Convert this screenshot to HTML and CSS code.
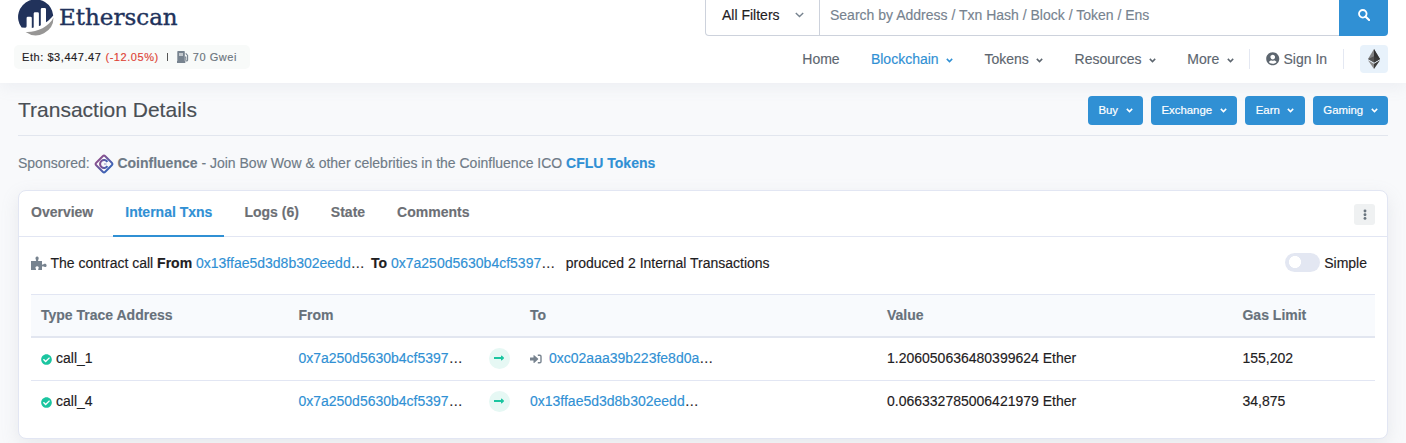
FILE: index.html
```html
<!DOCTYPE html>
<html lang="en">
<head>
<meta charset="utf-8">
<title>Transaction Details</title>
<link rel="stylesheet" href="styles.css">
</head>
<body>
<svg class="defs" width="0" height="0">
  <symbol id="angle" viewBox="0 0 7 5"><path d="M.8.9 3.5 3.6 6.2.9" fill="none" stroke="currentColor" stroke-width="1.5"/></symbol>
  <symbol id="check" viewBox="0 0 512 512"><path fill="currentColor" d="M504 256c0 136.967-111.033 248-248 248S8 392.967 8 256 119.033 8 256 8s248 111.033 248 248zM227.314 387.314l184-184c6.248-6.248 6.248-16.379 0-22.627l-22.627-22.627c-6.248-6.249-16.379-6.249-22.628 0L216 308.118l-70.059-70.059c-6.248-6.248-16.379-6.248-22.628 0l-22.627 22.627c-6.248 6.248-6.248 16.379 0 22.627l104 104c6.249 6.249 16.379 6.249 22.628.001z"/></symbol>
  <symbol id="arrow" viewBox="0 0 448 512"><path fill="currentColor" d="M313.941 216H12c-6.627 0-12 5.373-12 12v56c0 6.627 5.373 12 12 12h301.941v46.059c0 21.382 25.851 32.09 40.971 16.971l86.059-86.059c9.373-9.373 9.373-24.569 0-33.941l-86.059-86.059c-15.119-15.119-40.971-4.411-40.971 16.971V216z"/></symbol>
</svg>
<header class="header">
  <div class="brand">
    <div class="logo">
      <svg width="36" height="36" viewBox="0 0 36 36">
        <path fill="#21325b" d="M3.6 27.6A17.6 17.6 0 1 1 35.2 15.4C33 18.2 30.700 20.400 28 22.300V9.300q0-1.300-1.300-1.300h-2.600q-1.300 0-1.300 1.300v15.900q-.7.4-1.900.8V13.500q0-1.300-1.300-1.300h-2.600q-1.300 0-1.300 1.300v14q-.9.3-1.900.5V18q0-1.300-1.300-1.300H9.900Q8.600 16.700 8.600 18v8.200q0 1.400-1.300 1.500Z"/>
        <path fill="#979695" d="M35.500 17.500A17.700 17.700 0 0 1 7.600 32C18 32.700 31 27 35.500 17.500Z"/>
      </svg>
      <span class="wordmark">Etherscan</span>
    </div>
    <div class="ticker"><span>Eth: $3,447.47</span><span class="drop">(-12.05%)</span><span class="bar"></span>
      <svg width="12" height="12" viewBox="0 0 12 12"><path fill="#77838f" d="M1 0h6q.8 0 .8.8V10h.5v2H0v-2h.3V.8Q.3 0 1 0Z"/><path fill="#c3c9ce" d="M2 2h4v3H2z"/><path d="M8 6h.8v3q0 1 .8 1t1-.9V4.500L8.700 2.300M10.600 4.500v2" fill="none" stroke="#77838f" stroke-width="1.100"/></svg>
      <span class="gas">70 Gwei</span></div>
  </div>
  <div class="tools">
    <div class="search">
      <div class="filter">All Filters<svg width="9" height="6" viewBox="0 0 9 6"><path d="m.8.9 3.700 3.600L8.200.9" fill="none" stroke="#77838f" stroke-width="1.400"/></svg></div>
      <div class="query">Search by Address / Txn Hash / Block / Token / Ens</div>
      <div class="go"><svg width="12" height="12" viewBox="0 0 12 12"><circle cx="4.800" cy="4.800" r="3.800" fill="none" stroke="#fff" stroke-width="1.800"/><path d="m7.700 7.700 3.400 3.400" stroke="#fff" stroke-width="2.100" stroke-linecap="round"/></svg></div>
    </div>
    <nav class="nav">
      <a>Home</a>
      <a class="active">Blockchain<svg class="angle"><use href="#angle"/></svg></a>
      <a>Tokens<svg class="angle"><use href="#angle"/></svg></a>
      <a>Resources<svg class="angle"><use href="#angle"/></svg></a>
      <a>More<svg class="angle"><use href="#angle"/></svg></a>
      <div class="account"><svg width="13.500" height="13.500" viewBox="0 0 496 512"><path fill="#5d666f" d="M248 8C111 8 0 119 0 256s111 248 248 248 248-111 248-248S385 8 248 8zm0 96c48.600 0 88 39.400 88 88s-39.400 88-88 88-88-39.400-88-88 39.400-88 88-88zm0 344c-58.700 0-111.300-26.600-146.500-68.200 18.800-35.400 55.600-59.800 98.500-59.800 2.400 0 4.800.4 7.100 1.100 13 4.200 26.600 6.900 40.900 6.900 14.300 0 28-2.700 40.900-6.900 2.300-.7 4.700-1.100 7.100-1.100 42.900 0 79.700 24.400 98.500 59.800C359.300 421.400 306.700 448 248 448z"/></svg>Sign In</div>
      <div class="network"><svg width="12" height="20" viewBox="0 0 12 20"><path fill="#828384" d="m6 0 6 10-6 3.600L0 10Z"/><path fill="#343434" d="m6 0 6 10-6 3.600Z"/><path fill="#3c3c3b" d="m6 7.300 6 2.700-6 3.600Z"/><path fill="#555" d="M6 7.300 0 10l6 3.600Z"/><path fill="#8c8c8c" d="m0 11.200 6 3.500V20Z"/><path fill="#3c3c3b" d="m12 11.200-6 3.500V20Z"/></svg></div>
    </nav>
  </div>
</header>
<main class="main">
  <div class="heading">
    <h1>Transaction Details</h1>
    <div class="promos">
      <a class="promo buy">Buy<svg class="angle"><use href="#angle"/></svg></a>
      <a class="promo exchange">Exchange<svg class="angle"><use href="#angle"/></svg></a>
      <a class="promo earn">Earn<svg class="angle"><use href="#angle"/></svg></a>
      <a class="promo gaming">Gaming<svg class="angle"><use href="#angle"/></svg></a>
    </div>
  </div>
  <div class="sponsor">Sponsored:
    <svg width="20" height="20" viewBox="0 0 20 20"><defs><linearGradient id="cf"><stop stop-color="#86508f"/><stop offset="1" stop-color="#3e63b5"/></linearGradient></defs><rect x="3.600" y="3.600" width="12.800" height="12.800" rx="1.800" transform="rotate(45 10 10)" fill="none" stroke="url(#cf)" stroke-width="1.900"/><path d="M13.400 7.800A4 4 0 1 0 13.400 12.200" fill="none" stroke="url(#cf)" stroke-width="2.100"/><path d="M12.500 10H10" stroke="#7b73b5" stroke-width=".8"/></svg>
    <span><b>Coinfluence</b> - Join Bow Wow &amp; other celebrities in the Coinfluence ICO <b class="link">CFLU Tokens</b></span></div>
  <section class="card">
    <div class="tabs">
      <a>Overview</a><a class="selected">Internal Txns</a><a>Logs (6)</a><a>State</a><a>Comments</a>
      <div class="kebab"><svg width="4" height="12" viewBox="0 0 4 12"><g fill="#6b7680"><circle cx="2" cy="2" r="1.450"/><circle cx="2" cy="5.700" r="1.450"/><circle cx="2" cy="9.400" r="1.450"/></g></svg></div>
    </div>
    <div class="summary">
      <svg width="16" height="14" viewBox="0 0 16 14"><path fill="#77838f" d="M0 5h4.600c.8 0 .6-.8.200-1.500C4.100 1.900 4.600.4 6.100.4s2 1.500 1.300 3.100C7 4.300 6.900 5 7.700 5H11v2.900c0 1 .8.9 1.500.4 1.500-1 3.100-.4 3.100 1.100s-1.600 2.100-3.100 1.100c-.7-.5-1.500-.5-1.500.4V14H7.700c-.9 0-.6-.9-.2-1.500.7-1.200 0-2.200-1.400-2.200s-2.100 1-1.400 2.200c.4.600.7 1.500-.1 1.500H0Z"/></svg>
      <span>The contract call <b>From</b> <span class="link">0x13ffae5d3d8b302eedd</span>…</span>
      <span class="to"><b>To</b> <span class="link">0x7a250d5630b4cf5397</span>…</span>
      <span class="produced">produced 2 Internal Transactions</span>
      <span class="mode"><i class="switch"></i>Simple</span>
    </div>
    <table class="txns">
      <colgroup><col class="c-type"><col class="c-from"><col class="c-arrow"><col class="c-to"><col class="c-value"><col></colgroup>
      <thead><tr><th>Type Trace Address</th><th>From</th><th></th><th>To</th><th>Value</th><th>Gas Limit</th></tr></thead>
      <tbody>
        <tr><td><svg class="ok"><use href="#check"/></svg>call_1</td><td><span class="link">0x7a250d5630b4cf5397</span>…</td><td><span class="dir"><svg width="10" height="12"><use href="#arrow"/></svg></span></td><td><svg class="enter" width="12" height="10" viewBox="0 0 12 10"><path fill="#77838f" d="M.3 3.400H3.500V1.500q0-.8.7-.3L8 4.600q.5.400 0 .8L4.200 8.900q-.7.500-.7-.3V6.600H.3Q0 6.600 0 6.200V3.800Q0 3.400.3 3.400Z"/><path d="M7.800 1.200h2q1.200 0 1.200 1.200v5.200q0 1.200-1.200 1.200h-2" fill="none" stroke="#77838f" stroke-width="1.400"/></svg><span class="link">0xc02aaa39b223fe8d0a</span>…</td><td>1.206050636480399624 Ether</td><td>155,202</td></tr>
        <tr><td><svg class="ok"><use href="#check"/></svg>call_4</td><td><span class="link">0x7a250d5630b4cf5397</span>…</td><td><span class="dir"><svg width="10" height="12"><use href="#arrow"/></svg></span></td><td><span class="link">0x13ffae5d3d8b302eedd</span>…</td><td>0.066332785006421979 Ether</td><td>34,875</td></tr>
      </tbody>
    </table>
  </section>
</main>
</body>
</html>
```
FILE: styles.css
```css
* { box-sizing: border-box; }
body { margin: 0; height: 443px; overflow: hidden; background: #f8f9fb; color: #1e2022; font: 14px/20px "Liberation Sans", Arial, sans-serif; -webkit-text-stroke: .15px; }
svg { flex: none; }
.defs { display: block; height: 0; }
.header { display: flex; justify-content: space-between; height: 83px; padding: 0 18px 0 14px; background: #fff; box-shadow: 0 5px 14px rgba(150, 160, 180, .1); }
.logo { display: flex; height: 45px; padding-left: 4px; }
.wordmark { margin: 3px 0 0 5px; color: #21325b; font: 23px/28px "DejaVu Serif", serif; -webkit-text-stroke: .4px; }
.ticker { display: flex; align-items: center; width: 236px; height: 24px; padding-left: 8px; border-radius: 5px; background: #f8faf9; font-size: 11px; letter-spacing: .56px; white-space: nowrap; }
.drop { margin-left: 4px; color: #de4437; }
.bar { width: 1px; height: 8px; margin: 0 9px 0 8px; background: #555; }
.gas { margin-left: 4px; color: #6c757e; }
.search { display: flex; width: 683px; height: 36px; margin-left: auto; }
.filter, .query { display: flex; align-items: center; height: 36px; padding-bottom: 5px; border: solid #cdd2dc; border-width: 0 1px 1px; }
.filter { width: 115px; padding-left: 16px; gap: 15px; border-bottom-left-radius: 4px; }
.query { flex: 1; padding-left: 10px; border-width: 0 0 1px; color: #77838f; }
.go { display: grid; place-items: center; width: 49px; padding-bottom: 6px; border-bottom-right-radius: 4px; background: #3090d4; }
.nav { display: flex; align-items: center; justify-content: flex-end; height: 46px; gap: 31.300px; color: #5d666f; }
.nav a { display: flex; align-items: center; gap: 7.500px; }
.nav .active, .link { color: #3090d4; }
.angle { width: 7px; height: 5px; margin-top: 3px; }
.account { display: flex; align-items: center; gap: 4px; width: 95px; height: 20px; margin-left: -16px; padding-left: 16px; border: solid #e4e8f2; border-width: 0 1px; white-space: nowrap; }
.network { display: grid; place-items: center; width: 28px; height: 28px; margin-left: -15.300px; border-radius: 4px; background: #e8f2fb; }
.main { padding: 0 18px; }
.heading { display: flex; justify-content: space-between; align-items: center; height: 53px; border-bottom: 1px solid #e2e6ee; }
h1 { margin: 2px 0 0; color: #4a4f55; font-weight: 400; font-size: 21px; line-height: 26px; }
.promos { display: flex; gap: 8px; margin-top: 2px; }
.promo { display: flex; align-items: center; justify-content: center; gap: 7.500px; height: 29px; border-radius: 4px; background: #3090d4; color: #fff; font-size: 11.400px; -webkit-text-stroke: .2px #fff; }
.promo .angle { margin-top: 1px; }
.buy { width: 55px; }
.exchange { width: 86px; }
.earn { width: 60px; }
.gaming { width: 75px; }
.sponsor { display: flex; align-items: center; height: 54px; color: #6f7b87; gap: 3.900px; white-space: nowrap; }
.sponsor svg { margin-top: 1px; }
.card { height: 249px; border: 1px solid #e2e6f3; border-radius: 8px; background: #fff; box-shadow: 0 6px 18px rgba(140, 152, 164, .16); }
.tabs { display: flex; align-items: flex-start; gap: 8px; height: 46px; border-bottom: 1px solid #e2e6f3; color: #6c6f75; font-weight: 700; }
.tabs a { height: 46px; padding: 11px 12px 0; }
.tabs .selected { border-bottom: 2px solid #3090d4; color: #3090d4; }
.kebab { display: grid; place-items: center; width: 21px; height: 21px; margin: 13px 12px 0 auto; border-radius: 3px; background: #eff1f2; }
.summary { display: flex; align-items: center; height: 57px; padding: 0 20px 5px 12px; white-space: nowrap; }
.summary svg { margin-right: 3.500px; }
.to { margin-left: 6.300px; }
.produced { margin-left: 10.500px; }
.mode { display: flex; align-items: center; gap: 4px; margin-left: auto; }
.switch { width: 35px; height: 19px; margin-bottom: 2px; border-radius: 10px; background: radial-gradient(circle at 10px 9px, #fff 5.700px, #e3e7f2 6.300px); }
.txns { width: 1344px; margin-left: 12px; border-collapse: separate; border-spacing: 0; table-layout: fixed; }
.txns th, .txns td { height: 43px; padding: 0 0 2px 10px; text-align: left; white-space: nowrap; }
.txns th { height: 44px; border-top: 1px solid #e2e6f3; border-bottom: 2px solid #e2e6f0; background: #f8fafd; color: #67717b; }
.txns tr:first-child td { border-bottom: 1px solid #e2e6f3; }
.txns tr:last-child td { height: 42px; }
.c-type { width: 257.400px; }
.c-from { width: 190.600px; }
.c-arrow { width: 41px; }
.c-to { width: 357px; }
.c-value { width: 355.500px; }
.ok { width: 11px; height: 11px; margin-right: 4px; vertical-align: -1.500px; color: #1bc5a0; }
.dir { display: grid; place-items: center; width: 21px; height: 21px; border-radius: 50%; background: #e6f8f4; color: #1bc5a0; }
.enter { margin-right: 7px; vertical-align: -.500px; }
```
